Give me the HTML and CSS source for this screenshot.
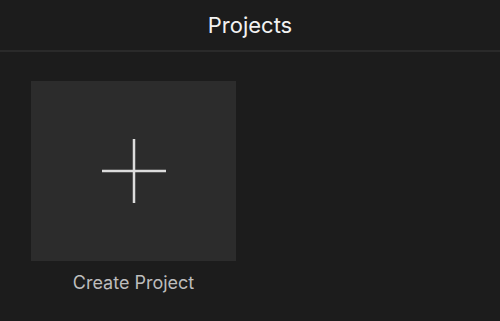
FILE: index.html
```html
<!DOCTYPE html>
<html lang="en">
<head>
    <meta charset="UTF-8" />
    <meta name="viewport" content="width=device-width, initial-scale=1" />
    <title>Projects</title>
    <link rel="stylesheet" href="styles.css">
</head>
<body>
    <header class="top-bar">
        <h1>Projects</h1>
    </header>

    <main class="project-grid">
        <div class="project-item">
            <div class="project-tile">
                <svg class="plus-icon" width="64" height="64" viewBox="0 0 64 64">
                    <path d="M32 0V64M0 32H64" stroke="#dcdcdc" stroke-width="2.5" />
                </svg>
            </div>
            <div class="project-label">Create Project</div>
        </div>
    </main>
</body>
</html>
```

FILE: styles.css
```css
body {
    margin: 0;
    background-color: #1c1c1c;
    font-family: Inter, "Noto Sans", sans-serif;
    height: 321px;
    overflow: hidden;
}
.top-bar {
    height: 50px;
    border-bottom: 2px solid #2a2a2a;
    display: flex;
    align-items: center;
    justify-content: center;
}
.top-bar h1 {
    margin: 0;
    font-size: 22px;
    font-weight: 400;
    color: #f2f2f2;
}
.project-grid {
    padding: 29px 31px;
    display: flex;
}
.project-item {
    display: flex;
    flex-direction: column;
    align-items: center;
}
.project-tile {
    width: 205px;
    height: 180px;
    background-color: #2c2c2c;
    display: flex;
    align-items: center;
    justify-content: center;
}
.project-label {
    margin-top: 11px;
    font-size: 18px;
    color: #bdbdbd;
}
```
